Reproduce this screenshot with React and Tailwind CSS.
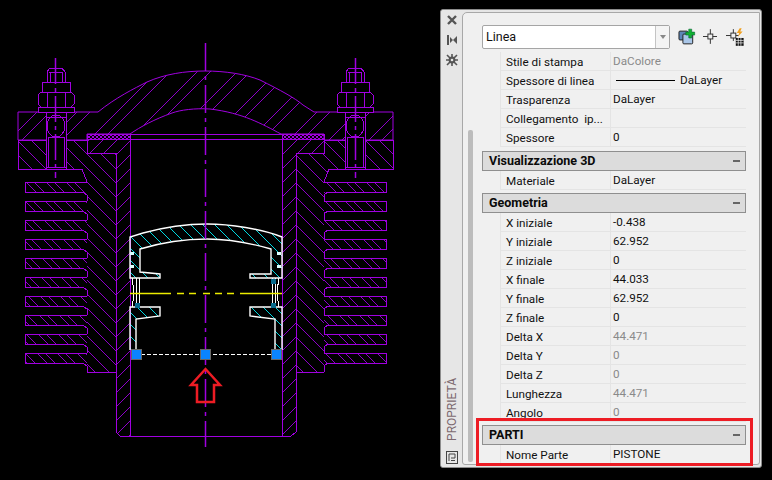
import React from 'react';

const PURPLE = '#a000e0';
const HATCH = '#8c00c8';
const CYAN = '#00d8e0';
const FONT = "Roboto, 'Liberation Sans', sans-serif";

const finTops = [182, 201, 220, 239, 258, 277, 296, 315, 334, 353];

const headPath = 'M18 112 L98 112 C115 98 135 88 147 82 C165 74 185 71 205 71 C225 71 245 74 260 80 C280 90 295 98 303 105 L314 112 L393 112 L393 140 L324 140 L324 134 L281 134 C262 124 243 113 210 109 C195 108 180 110 172 113 C155 119 140 127 130 134 L87 134 L87 140 L18 140 Z';
const crownPath = 'M130 278 V237 L143 233 C165 227 185 224 207 224 C230 224 262 229 282 237 V278 H250 V274 H271 V249 C250 243 230 239 207 239 C185 239 160 243 140 249 V272 L160 274 V278 Z';

// hatch lines clipped to a shape; period and pair are horizontal distances
const Hatch = ({ id, d, dir, period, pair, phase = 0, color = HATCH }) => {
  const lines = [];
  for (let c = -700 + phase; c < 1000; c += period) {
    lines.push(c);
    if (pair) lines.push(c + pair);
  }
  return (
    <>
      <clipPath id={id}>
        <path d={d} />
      </clipPath>
      <g clipPath={`url(#${id})`} stroke={color} strokeWidth="1">
        {lines.map((c) =>
          dir === '/' ? (
            <line key={c} x1={c} y1="0" x2={c - 480} y2="480" />
          ) : (
            <line key={c} x1={c} y1="0" x2={c + 480} y2="480" />
          )
        )}
      </g>
    </>
  );
};

const Bolt = ({ x }) => (
  <g fill="none" stroke={PURPLE} strokeWidth="1">
    <rect x={x - 10} y="112" width="20" height="57" fill="#000" />
    <path d={`M${x - 6} 68 h12 l3 4 v10 h-18 v-10 z`} fill="#000" />
    <path d={`M${x - 7} 72 h14 M${x - 6} 72 v10 M${x + 6} 72 v10`} />
    <rect x={x - 14} y="82" width="28" height="10" fill="#000" />
    <path d={`M${x - 15} 92 h30 l3 3 v9 l-3 3 h-30 l-3 -3 v-9 z`} fill="#000" />
    <path d={`M${x - 9} 92 v15 M${x + 9} 92 v15`} />
    <rect x={x - 18} y="107" width="36" height="5" fill="#000" />
    <path d={`M${x - 10} 117 h20`} />
    <ellipse cx={x} cy="126" rx="9" ry="11" />
    <rect x={x - 8} y="137" width="16" height="30" />
    <path d={`M${x - 10} 167 h20`} />
  </g>
);

const Fin = ({ y, side }) => {
  const d =
    side === 'left'
      ? `M87 ${y} L25 ${y} L25 ${y + 10} L83 ${y + 10} L87 ${y + 13} V${y + 19}`
      : `M324 ${y} L386 ${y} L386 ${y + 10} L328 ${y + 10} L324 ${y + 13} V${y + 19}`;
  const clip =
    side === 'left'
      ? `M87 ${y} L25 ${y} L25 ${y + 10} L83 ${y + 10} L87 ${y + 13} Z`
      : `M324 ${y} L386 ${y} L386 ${y + 10} L328 ${y + 10} L324 ${y + 13} Z`;
  return (
    <>
      <Hatch id={`fin-${side}-${y}`} d={clip} dir="\" period={20} pair={8} phase={4} />
      <path d={d} fill="none" stroke={PURPLE} />
    </>
  );
};

const Drawing = () => (
  <svg className="w-[440px] h-[480px] shrink-0" viewBox="0 0 440 480" shapeRendering="crispEdges">
    <defs>
      <pattern id="gasket" width="4" height="4" patternUnits="userSpaceOnUse">
        <rect width="2" height="2" fill={PURPLE} />
        <rect x="2" y="2" width="2" height="2" fill={PURPLE} />
      </pattern>
    </defs>

    {/* cylinder */}
    <Hatch id="plateL" d="M18 140 H87 V153 H116 V372 H87 V182 L82 169 H18 Z" dir="\" period={14} phase={3} />
    <Hatch id="plateR" d="M393 140 H324 V153 H296 V372 H324 V182 L329 169 H393 Z" dir="\" period={14} phase={1} />
    <path d="M18 140 V169 H82 L87 182 M87 372 H116" fill="none" stroke={PURPLE} />
    <path d="M393 140 V169 H329 L324 182 M324 372 H296" fill="none" stroke={PURPLE} />
    {finTops.map((y) => <Fin key={y} y={y} side="left" />)}
    {finTops.map((y) => <Fin key={y} y={y} side="right" />)}
    <Hatch id="linerL" d="M87 140 H130 V436 H120 L116 432 V153 H87 Z" dir="/" period={14} phase={5} />
    <Hatch id="linerR" d="M324 140 H282 V436 H291 L296 432 V153 H324 Z" dir="/" period={14} phase={3} />
    <path d="M87 140 V153 H116 V432 L120 436 H291 L296 432 V153 H324 V140 M130 134 V436 M282 134 V436 M130 134 H282 M130 139 H282 M18 140 H87 M324 140 H393" fill="none" stroke={PURPLE} />

    {/* head */}
    <Hatch id="head" d={headPath} dir="/" period={40} pair={13} phase={9} />
    <path d={headPath} fill="none" stroke={PURPLE} shapeRendering="auto" />
    <rect x="87" y="134" width="43" height="5" fill="url(#gasket)" stroke={PURPLE} />
    <rect x="282" y="134" width="42" height="5" fill="url(#gasket)" stroke={PURPLE} />
    <Bolt x={56} />
    <Bolt x={355} />
    <path d="M55.5 58 V178 M355.5 58 V178" stroke={PURPLE} strokeWidth="1.5" strokeDasharray="26 4 4 4" shapeRendering="auto" />

    {/* piston */}
    <Hatch id="crown" d={crownPath} dir="\" period={24} pair={12} phase={6} color={CYAN} />
    <path d={crownPath} fill="none" stroke="#fff" strokeWidth="1.4" shapeRendering="auto" />
    <Hatch id="skirtL" d="M130 307 H160 V316 L136 319 V350 H130 Z" dir="\" period={24} pair={12} phase={2} color={CYAN} />
    <Hatch id="skirtR" d="M282 307 H250 V316 L275 319 V350 H282 Z" dir="\" period={24} pair={12} phase={8} color={CYAN} />
    <path d="M130 350 V307 H160 V316 L136 319 V350" fill="none" stroke="#fff" strokeWidth="1.4" shapeRendering="auto" />
    <path d="M282 350 V307 H250 V316 L275 319 V350" fill="none" stroke="#fff" strokeWidth="1.4" shapeRendering="auto" />
    <path d="M132 278 C134 288 134 298 132 307 M136 278 V305 M139 278 V305 M279 278 C277 288 277 298 279 307 M275 278 V305 M272 278 V305" fill="none" stroke="#fff" />
    <path d="M130 253 h4 M130 266 h4 M277 253 h4 M277 266 h4" stroke="#dff" strokeWidth="3" />
    <path d="M130 293.5 H171 M177 293.5 H184 M189 293.5 H196 M203 293.5 H210 M215 293.5 H222 M227 293.5 H234 M240 293.5 H282" stroke="#ecec00" strokeWidth="1.5" shapeRendering="auto" />
    <rect x="135" y="303" width="5" height="5" fill="#0a6b8c" />
    <rect x="271" y="303" width="5" height="5" fill="#0a6b8c" />
    <rect x="271" y="279" width="5" height="5" fill="#0a6b8c" />

    {/* axis */}
    <path d="M205.5 43 V447" stroke={PURPLE} strokeWidth="1.5" strokeDasharray="28 5 4 5" shapeRendering="auto" />

    {/* selected line and grips */}
    <path d="M141 354 H271" stroke="#fff" strokeDasharray="4 2" />
    <rect x="131" y="349" width="10" height="10" fill="#0a84ff" stroke="#666" />
    <rect x="200" y="349" width="10" height="10" fill="#0a84ff" stroke="#666" />
    <rect x="271" y="349" width="10" height="10" fill="#0a84ff" stroke="#666" />

    {/* arrow */}
    <path d="M205.5 369 L220 385 H214 V402 H197 V385 H191 Z" fill="none" stroke="#ed1c24" strokeWidth="2.5" shapeRendering="auto" />
  </svg>
);

const Row = ({ name, value, muted, line }) => (
  <div className="flex h-[19px] ml-[18px] border-b border-l border-[#e4e4e4]">
    <div className="w-[110px] shrink-0 pl-[5px] border-r border-[#e4e4e4] text-[11.7px] leading-[21px] text-[#111] whitespace-pre overflow-hidden">{name}</div>
    <div className={`flex-1 pl-[2px] pt-px text-[11.7px] leading-[17px] flex items-center gap-[5px] whitespace-nowrap ${muted ? 'text-[#8a8a8a]' : 'text-[#111]'}`}>
      {line && <span className="block w-[59px] h-px bg-black ml-[3px]" />}
      {value}
    </div>
  </div>
);

const Section = ({ title }) => (
  <div className="flex items-center justify-between h-[20px] border border-[#8f8f8f] bg-[#dcdcdc] pl-[6px] pr-[5px]">
    <span className="text-[12.5px] font-bold text-[#0a0a0a]">{title}</span>
    <span className="block w-[7px] h-[2px] bg-[#666]" />
  </div>
);

const Strip = () => (
  <div className="w-[21px] shrink-0 flex flex-col items-center pt-[4px] pb-[3px] bg-[#e6e6e6] rounded-l-[3px]">
    <svg className="w-[12px] h-[12px]" viewBox="0 0 12 12">
      <path d="M2 2 L10 10 M10 2 L2 10" stroke="#555" strokeWidth="2.4" />
    </svg>
    <svg className="w-[12px] h-[12px] mt-[8px]" viewBox="0 0 12 12">
      <path d="M2 1 V11" stroke="#555" strokeWidth="2" />
      <path d="M4 3 L7 6 L4 9 Z M11 2 V10 L7 6 Z" fill="#555" />
    </svg>
    <svg className="w-[12px] h-[12px] mt-[8px]" viewBox="0 0 12 12">
      <path d="M1 1 L11 11 M11 1 L1 11 M6 0 V12 M0 6 H12" stroke="#555" strokeWidth="1.6" />
      <circle cx="6" cy="6" r="3.4" fill="#555" />
      <circle cx="6" cy="6" r="1.3" fill="#e6e6e6" />
    </svg>
    <span className="mt-auto text-[12px] leading-[14px] text-[#7d6a70] [writing-mode:vertical-rl] rotate-180">PROPRIETÀ</span>
    <svg className="w-[12px] h-[13px] mt-[10px]" viewBox="0 0 12 13">
      <rect x="0.5" y="0.5" width="11" height="12" fill="none" stroke="#444" />
      <path d="M3 3 H9 V7 H5 M3 3 V10 M5 9.500 H9" fill="none" stroke="#444" />
    </svg>
  </div>
);

const Toolbar = () => (
  <div className="flex items-center h-[39px] pt-[8px]">
    <div className="flex w-[192px] h-[24px] bg-white border border-[#a5a5a5] rounded-[2px]">
      <span className="flex-1 pl-[3px] text-[12.5px] leading-[22px] text-[#111]">Linea</span>
      <span className="w-[14px] border-l border-[#c4c4c4] bg-[#f4f4f4] flex items-center justify-center">
        <span className="block w-0 h-0 border-x-[3px] border-x-transparent border-t-[4px] border-t-[#888]" />
      </span>
    </div>
    <svg className="w-[18px] h-[18px] ml-[8px]" viewBox="0 0 18 18">
      <rect x="1" y="3" width="9" height="9" rx="1" fill="#5d86b8" stroke="#222" />
      <rect x="5" y="6" width="10" height="10" rx="1" fill="#a9c6e8" stroke="#222" />
      <path d="M11 1 h3 v3 h3 v3 h-3 v3 h-3 v-3 h-3 v-3 h3 z" fill="#12b032" stroke="#063" strokeWidth="0.6" />
    </svg>
    <svg className="w-[15px] h-[15px] ml-[7px]" viewBox="0 0 15 15">
      <rect x="5" y="5" width="5" height="5" fill="none" stroke="#333" />
      <path d="M0 7.500 H5 M10 7.500 H15 M7.500 0 V5 M7.500 10 V15" stroke="#333" />
    </svg>
    <svg className="w-[20px] h-[20px] ml-[9px]" viewBox="0 0 20 20">
      <rect x="5" y="6" width="5" height="5" fill="none" stroke="#333" />
      <path d="M0 8.500 H5 M10 8.500 H13 M7.500 2 V6 M7.500 11 V14" stroke="#333" />
      <path d="M14 1 L11 6 H13.500 L12 10 L17 4.500 H14.500 L16 1 Z" fill="#f0a020" />
      <rect x="10" y="11" width="8" height="8" fill="#111" />
      <path d="M10 13.500 H18 M10 16 H18 M12.500 11 V19 M15.200 11 V19" stroke="#fff" strokeWidth="0.7" />
    </svg>
  </div>
);

export default function App() {
  return (
    <div className="relative flex w-[772px] h-[480px] bg-black overflow-hidden" style={{ fontFamily: FONT }}>
      <Drawing />
      <div className="mt-[9px] w-[322px] h-[459px] flex bg-[#e6e6e6] border border-[#8c8c8c] rounded-[3px]">
        <Strip />
        <div className="flex-1 flex mt-[2px] mr-[1px] mb-[2px] bg-[#f0f0f0] border border-[#a8a8a8] rounded-tl-[5px] rounded-b-[3px] overflow-hidden">
          <div className="w-[19px] shrink-0 pt-[117px] pl-[5px] pb-[2px]">
            <div className="w-[5px] h-full bg-[#bcbcbc] rounded-[2px]" />
          </div>
          <div className="w-[264px] shrink-0">
            <Toolbar />
            <Row name="Stile di stampa" value="DaColore" muted />
            <Row name="Spessore di linea" value="DaLayer" line />
            <Row name="Trasparenza" value="DaLayer" />
            <Row name="Collegamento  ip..." value="" />
            <Row name="Spessore" value="0" />
            <div className="mt-[4px]"><Section title="Visualizzazione 3D" /></div>
            <Row name="Materiale" value="DaLayer" />
            <div className="mt-[3px]"><Section title="Geometria" /></div>
            <Row name="X iniziale" value="-0.438" />
            <Row name="Y iniziale" value="62.952" />
            <Row name="Z iniziale" value="0" />
            <Row name="X finale" value="44.033" />
            <Row name="Y finale" value="62.952" />
            <Row name="Z finale" value="0" />
            <Row name="Delta X" value="44.471" muted />
            <Row name="Delta Y" value="0" muted />
            <Row name="Delta Z" value="0" muted />
            <Row name="Lunghezza" value="44.471" muted />
            <Row name="Angolo" value="0" muted />
            <div className="mt-[3px]"><Section title="PARTI" /></div>
            <Row name="Nome Parte" value="PISTONE" />
          </div>
        </div>
      </div>
      {/* red callout over the panel */}
      <div className="absolute left-[476px] top-[418px] w-[277px] h-[48px] border-[3px] border-[#ed1c24]" />
    </div>
  );
}
